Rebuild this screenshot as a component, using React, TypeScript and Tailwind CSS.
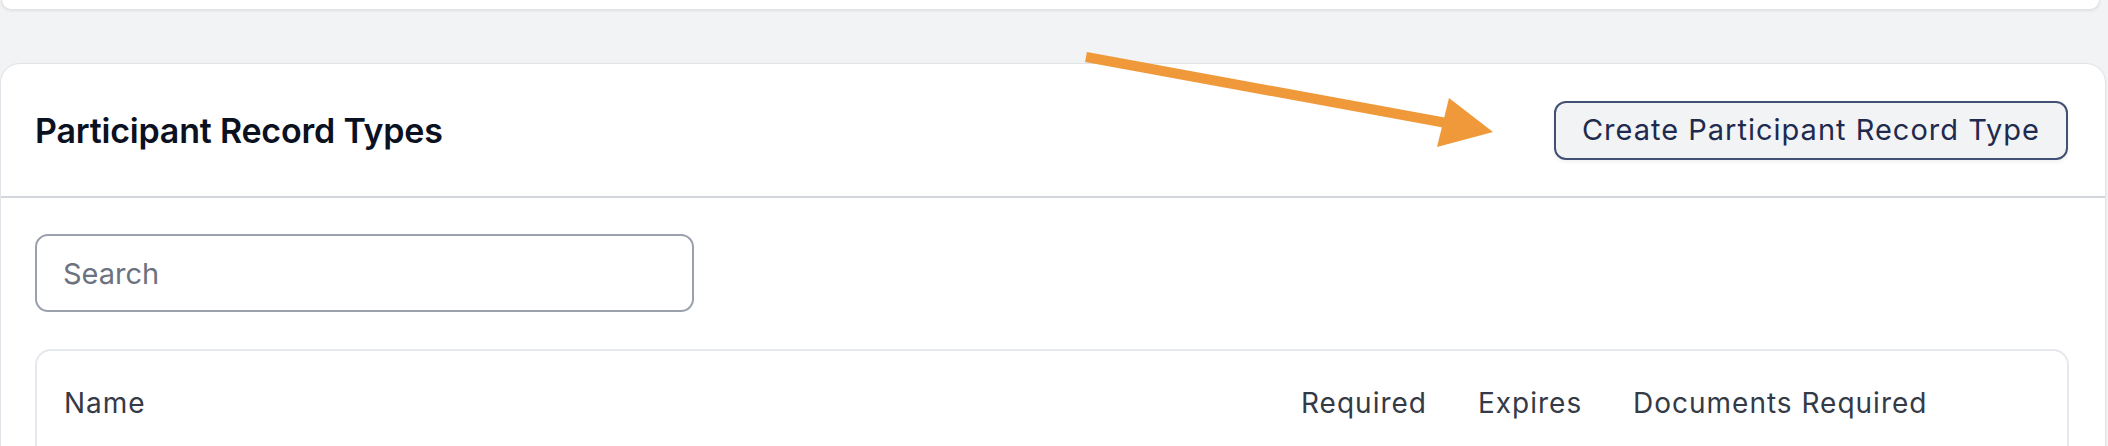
import React from 'react';

const COLUMNS = [
  { label: 'Required', width: 'w-[177px]' },
  { label: 'Expires', width: 'w-[155px]' },
  { label: 'Documents Required', width: 'w-[295px]' },
];

const Arrow: React.FC = () => (
  <svg className="absolute left-0 top-0 pointer-events-none" width="2108" height="446" viewBox="0 0 2108 446">
    <line x1="1086" y1="57" x2="1452" y2="124" stroke="#f0993a" strokeWidth="10" />
    <polygon points="1449,98 1493,132 1437,147" fill="#f0993a" />
  </svg>
);

export default function App() {
  return (
    <div className="relative w-[2108px] h-[446px] overflow-hidden bg-[#f2f3f5] font-['Inter',sans-serif]">
      {/* Previous panel, scrolled mostly out of view */}
      <div className="ml-[1px] w-[2099px] h-[10px] bg-white rounded-b-[15px] border border-t-0 border-[#dfe2e7] shadow-[0_1px_3px_rgba(0,0,0,0.08)]" />

      {/* Record types panel */}
      <div className="mt-[53px] w-[2106px] bg-white rounded-[20px] border border-[#e1e4e9] shadow-[0_1px_3px_rgba(0,0,0,0.06)]">
        <div className="h-[134px] flex items-center justify-between pl-[34px] pr-[37px] border-b-2 border-[#d3d7dd]">
          <h2 className="text-[34px] font-semibold text-[#0b1120] tracking-[-0.2px]">Participant Record Types</h2>
          <button className="h-[59px] px-[26px] rounded-[12px] border-2 border-[#415073] bg-[#f2f3f5] text-[29px] tracking-[1px] text-[#1e2a4e] shadow-[0_2px_4px_rgba(0,0,0,0.06)]">
            Create Participant Record Type
          </button>
        </div>

        <div className="pl-[34px] pr-[36px] pt-[36px]">
          <input
            type="text"
            placeholder="Search"
            className="w-[659px] h-[78px] rounded-[13px] border-2 border-[#9aa1ad] px-[26px] text-[29px] text-[#111827] placeholder:text-[#6b7280] outline-none"
          />

          <div className="mt-[37px] w-[2034px] h-[200px] rounded-[16px] border-2 border-[#e5e8ee]">
            <div className="flex items-center h-[104px] pl-[27px] text-[28px] tracking-[1px] text-[#343a46]">
              <div className="flex-1">Name</div>
              {COLUMNS.map((col) => (
                <div key={col.label} className={col.width}>{col.label}</div>
              ))}
              <div className="w-[139px]" />
            </div>
          </div>
        </div>
      </div>

      <Arrow />
    </div>
  );
}
